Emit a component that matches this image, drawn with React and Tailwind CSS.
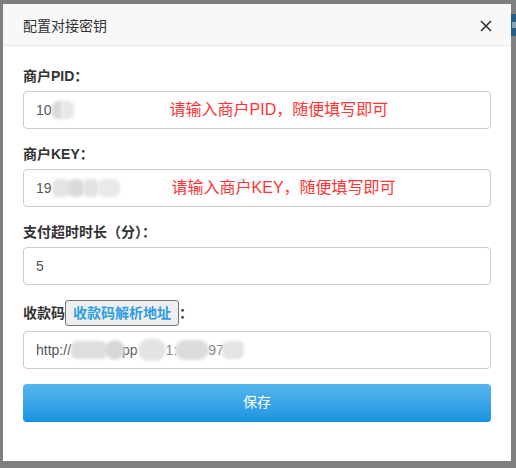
import React from 'react';

// blurred mask over private values
const Blob = ({ className }) => (
  <span className={`inline-block shrink-0 h-[18px] rounded-[6px] blur-[1.5px] ${className}`} />
);

const Input = ({ children }) => (
  <div className="h-[38px] border border-[#ccc] rounded-[4px] bg-white px-[12px] flex items-center text-[14px] text-[#555]">
    {children}
  </div>
);

const Field = ({ label, children }) => (
  <div className="mb-[15px]">
    <div className="h-[20px] leading-[20px] mb-[5px] text-[14px] font-bold text-[#333]">{label}</div>
    <Input>{children}</Input>
  </div>
);

const Note = ({ children, className = '' }) => (
  <span className={`text-[16px] leading-[22px] text-[#f33] ${className}`}>{children}</span>
);

const App = () => {
  return (
    <div
      className="relative w-[516px] h-[468px] overflow-hidden bg-[#7f7f7f] pt-[4px] pl-[3px]"
      style={{ fontFamily: '"Liberation Sans", "Noto Sans CJK SC", sans-serif' }}
    >
      {/* page behind the backdrop */}
      <div className="absolute right-0 top-[14px] w-[5px] h-[22px] bg-[#245f85] pt-[8px] pl-[1px]">
        <div className="w-[4px] h-[6px] bg-[#8aa3b5]" />
      </div>

      <div className="w-[508px] h-[457px] bg-white">
        {/* header */}
        <div className="h-[42px] bg-[#f8f8f8] border-b border-[#e9e9e9] flex items-center justify-between pl-[20px] pr-[19px]">
          <span className="text-[14px] text-[#333] leading-[20px] pt-[2px]">配置对接密钥</span>
          <svg width="12" height="12" viewBox="0 0 12 12" className="mt-[2px]">
            <path d="M1 1 L11 11 M11 1 L1 11" stroke="#333" strokeWidth="1.6" fill="none" />
          </svg>
        </div>

        {/* body */}
        <div className="px-[20px] pt-[20px]">
          <Field label="商户PID：">
            <span>10</span>
            <Blob className="w-[10px] bg-[#d9d9d9] rounded-r-none" />
            <Blob className="w-[12px] bg-[#e6e6e6] rounded-l-none" />
            <Note className="ml-[96px]">请输入商户PID，随便填写即可</Note>
          </Field>

          <Field label="商户KEY：">
            <span>19</span>
            <Blob className="w-[18px] bg-[#e4e4e4]" />
            <Blob className="w-[16px] bg-[#dadada] -ml-[2px]" />
            <Blob className="w-[16px] bg-[#e2e2e2] -ml-[1px]" />
            <Blob className="w-[22px] bg-[#e9e9e9] -ml-[1px]" />
            <Note className="ml-[52px]">请输入商户KEY，随便填写即可</Note>
          </Field>

          <Field label="支付超时时长（分）：">
            <span>5</span>
          </Field>

          <div className="mb-[15px]">
            <div className="h-[26px] mb-[5px] flex items-center text-[14px] font-bold text-[#333]">
              <span>收款码</span>
              <span className="h-[26px] px-[7px] flex items-center border border-[#767676] bg-[#efefef] rounded-[3px] text-[#2c9ee3]">
                收款码解析地址
              </span>
              <span>：</span>
            </div>
            <Input>
              <span>http://</span>
              <Blob className="w-[36px] bg-[#dedede]" />
              <Blob className="w-[20px] h-[20px] bg-[#d7d7d7] rounded-full -ml-[2px]" />
              <span className="text-[#666] -ml-[3px]">pp</span>
              <Blob className="w-[28px] h-[22px] bg-[#e3e3e3] rounded-full" />
              <span className="text-[#888]">1:</span>
              <Blob className="w-[34px] h-[20px] bg-[#dcdcdc] rounded-full -ml-[2px]" />
              <span className="text-[#888] -ml-[1px]">97</span>
              <Blob className="w-[22px] bg-[#e4e4e4] -ml-[2px]" />
            </Input>
          </div>

          <button className="w-full h-[38px] rounded-[4px] bg-gradient-to-b from-[#54b6ec] to-[#1995e1] border-b border-[#1789d0] text-white text-[14px]">
            保存
          </button>
        </div>
      </div>
    </div>
  );
};

export default App;
